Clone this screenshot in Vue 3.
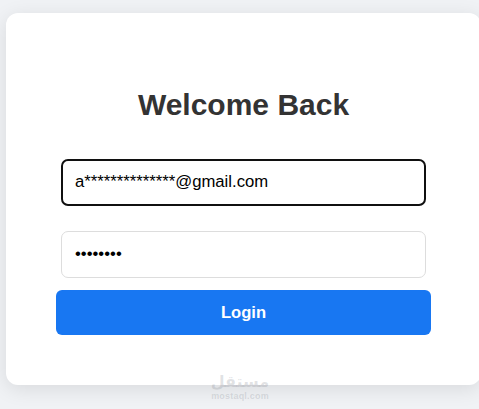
<script setup>
const email = 'a**************@gmail.com'
const password = 'password'
</script>

<template>
  <main class="page">
    <section class="card">
      <h1 class="title">Welcome Back</h1>
      <form class="form" @submit.prevent>
        <input class="field field-focus" type="text" :value="email" />
        <input class="field field-pass" type="password" :value="password" />
        <button class="login" type="button">Login</button>
      </form>
    </section>
    <div class="mark" aria-hidden="true">
      <span class="mark-ar">مستقل</span>
      <span class="mark-en">mostaql.com</span>
    </div>
  </main>
</template>

<style>
html, body { margin: 0; background: #f0f2f5; overflow: hidden; }
</style>

<style scoped>
.page {
  position: relative;
  width: 479px;
  height: 409px;
  overflow: hidden;
  padding: 13px 0 0 6px;
  box-sizing: border-box;
  background: #f0f2f5;
  font-family: "Liberation Sans", Arial, sans-serif;
}
.card {
  width: 475px;
  height: 372px;
  box-sizing: border-box;
  padding: 73px 50px 0;
  background: #fff;
  border-radius: 12px;
  box-shadow: 0 4px 20px rgba(0, 0, 0, 0.1);
}
.title {
  margin: 0 0 35px;
  font-size: 30px;
  line-height: 38px;
  font-weight: 700;
  text-align: center;
  color: #333;
}
.form {
  display: flex;
  flex-direction: column;
  align-items: center;
}
.field {
  display: block;
  width: 365px;
  height: 47px;
  box-sizing: border-box;
  margin: 0 0 25px;
  background: #fff;
  color: #000;
  font-family: inherit;
  font-size: 16.7px;
  border-radius: 7px;
  outline: none;
}
.field-focus {
  padding: 0 12px 2px;
  border: 2px solid #101010;
}
.field-pass {
  padding: 0 13px 2px;
  border: 1px solid #ddd;
  margin-bottom: 12px;
}
.login {
  width: 375px;
  height: 45px;
  border: 0;
  border-radius: 6px;
  background: #1877f2;
  color: #fff;
  font-family: inherit;
  font-size: 16.6px;
  font-weight: 700;
}
.mark {
  position: absolute;
  left: 180px;
  top: 373px;
  width: 120px;
  display: flex;
  flex-direction: column;
  align-items: center;
  gap: 2px;
  color: rgba(120, 125, 135, 0.22);
  pointer-events: none;
}
.mark-ar {
  font-family: "DejaVu Sans", sans-serif;
  font-size: 16px;
  line-height: 17px;
  font-weight: 700;
}
.mark-en {
  font-size: 9px;
  line-height: 9px;
  font-weight: 700;
  letter-spacing: 0.2px;
}
</style>
